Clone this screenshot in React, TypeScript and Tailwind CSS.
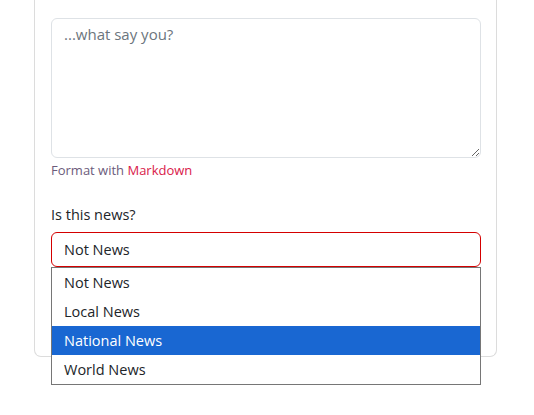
import React from "react";

export default function App() {
  const items = ["Not News", "Local News", "National News", "World News"];
  return (
    <div className="w-[534px] h-[415px] bg-white overflow-hidden" style={{ fontFamily: '"Open Sans", "Liberation Sans", sans-serif' }}>
      <div className="relative ml-[34px] w-[463px] border border-t-0 border-[#dcdcdc] rounded-b-[7px] pl-[16px] pr-[15px] pt-[18px] pb-[89px]">
        <textarea
          className="block w-[430px] h-[140px] border border-[#dee2e6] rounded-[6px] px-[12px] pt-[4px] pb-[7px] text-[15px] leading-[22px] text-[#212529] placeholder:text-[#6c757d] outline-none"
          placeholder="...what say you?"
        />
        <div className="mt-[2px] text-[13px] leading-[20px] text-[#6c5b7b]">
          Format with <span className="text-[#d9184a]">Markdown</span>
        </div>
        <div className="mt-[24px] text-[14.5px] leading-[22px] text-[#212529]">Is this news?</div>
        <div className="relative mt-[6px] w-[430px]">
          <div className="h-[35px] border border-[#d40000] rounded-[6px] pl-[12px] flex items-center text-[14.5px] text-[#212529]">
            Not News
          </div>
          <div className="absolute left-0 top-[35px] w-[430px] border border-[#767676] bg-white z-10">
            {items.map((it) => (
              <div
                key={it}
                className={
                  it === "National News"
                    ? "h-[29px] pl-[12px] flex items-center text-[14.5px] bg-[#1967d2] text-white"
                    : "h-[29px] pl-[12px] flex items-center text-[14.5px] text-[#212529]"
                }
              >
                {it}
              </div>
            ))}
          </div>
        </div>
      </div>
    </div>
  );
}
